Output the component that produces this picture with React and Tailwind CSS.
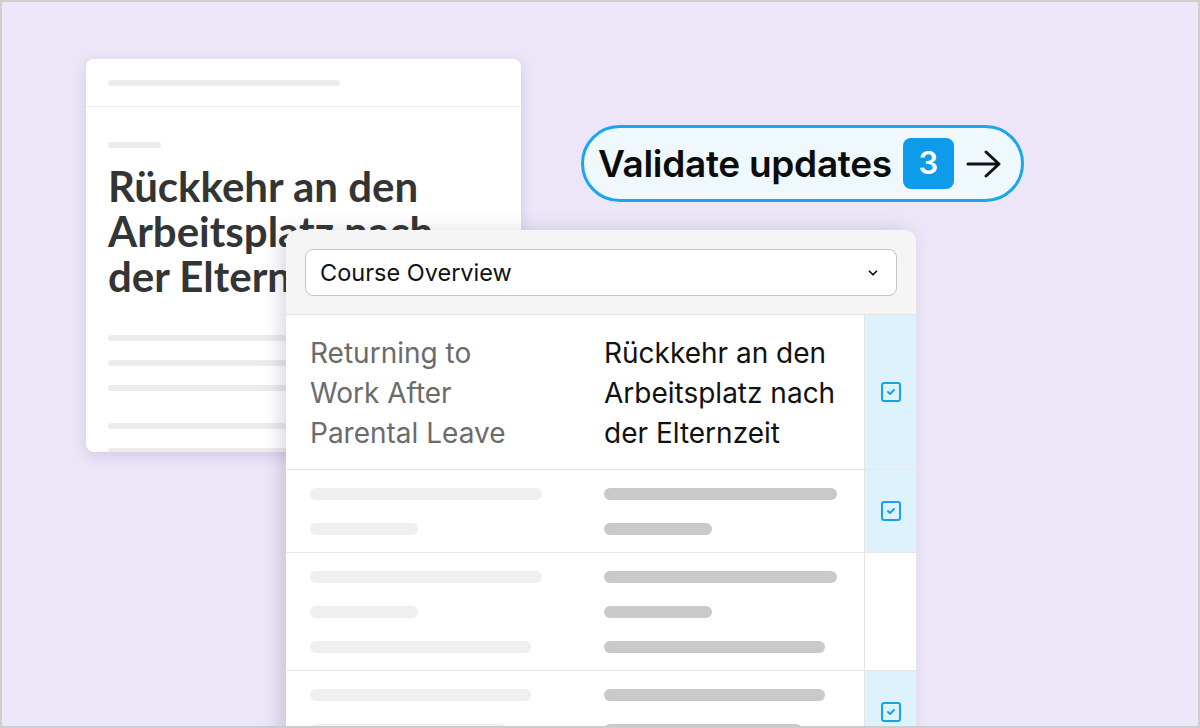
import { SquareCheck, ChevronDown } from "lucide-react";

function Bar({ w, dark }) {
  return (
    <div
      className={`h-3 rounded-full ${dark ? "bg-[#c9c9c9]" : "bg-[#efefef]"} ${w}`}
    />
  );
}

function CheckCell({ checked }) {
  return (
    <div
      className={`w-[52px] shrink-0 border-l border-[#e4e4e4] flex items-center justify-center ${
        checked ? "bg-[#ddf2fc]" : "bg-white"
      }`}
    >
      {checked && <SquareCheck size={24} strokeWidth={2} className="text-[#16a3ea]" />}
    </div>
  );
}

function BarRow({ left, right, checked, last }) {
  return (
    <div className={`flex ${last ? "" : "border-b border-[#e6e6e6]"}`}>
      <div className="flex-1 flex pt-[18px] pb-[17px]">
        <div className="w-[294px] pl-6 flex flex-col gap-[23px]">
          {left.map((w, i) => (
            <Bar key={i} w={w} />
          ))}
        </div>
        <div className="flex-1 pl-[24px] flex flex-col gap-[23px]">
          {right.map((w, i) => (
            <Bar key={i} w={w} dark />
          ))}
        </div>
      </div>
      <CheckCell checked={checked} />
    </div>
  );
}

export default function App() {
  return (
    <div className="w-[1200px] h-[728px] overflow-hidden border-2 border-[#cdcdcd] bg-[#ece6f8] relative font-['Inter',sans-serif]">
      {/* back card */}
      <div className="ml-[84px] mt-[57px] w-[435px] h-[393px] bg-white rounded-lg shadow-[0_4px_14px_rgba(90,70,140,0.18)] overflow-hidden">
        <div className="h-[48px] border-b border-[#ececec] px-[22px] flex items-center">
          <div className="h-[6px] w-[232px] rounded-full bg-[#ececec]" />
        </div>
        <div className="px-[22px] pt-[35px]">
          <div className="h-[6px] w-[53px] rounded-full bg-[#ececec]" />
          <h1 className="mt-[16px] font-['Lato',sans-serif] font-bold text-[42px] leading-[45px] text-[#333535]">
            Rückkehr an den
            <br />
            Arbeitsplatz nach
            <br />
            der Elternzeit
          </h1>
          <div className="mt-[36px] flex flex-col gap-[19px]">
            <div className="h-[6px] w-[380px] rounded-full bg-[#ececec]" />
            <div className="h-[6px] w-[380px] rounded-full bg-[#ececec]" />
            <div className="h-[6px] w-[380px] rounded-full bg-[#ececec]" />
          </div>
          <div className="mt-[32px] flex flex-col gap-[19px]">
            <div className="h-[6px] w-[380px] rounded-full bg-[#ececec]" />
            <div className="h-[6px] w-[380px] rounded-full bg-[#ececec]" />
          </div>
        </div>
      </div>

      {/* validate button */}
      <div className="absolute left-[579px] top-[123px] w-[443px] h-[77px] rounded-full border-[3px] border-[#1aa6ea] bg-[#eff8fd] flex items-center pl-[14px]">
        <span className="text-[37px] font-semibold text-[#0c0c0c] tracking-[-0.3px] leading-none">
          Validate updates
        </span>
        <span className="ml-[11px] w-[51px] h-[51px] rounded-lg bg-[#0c9cea] text-white text-[31px] font-semibold flex items-center justify-center">
          3
        </span>
        <svg width="36" height="30" viewBox="0 0 36 30" fill="none" className="ml-[12px]">
          <path d="M2 15H33M20 3l13 12-13 12" stroke="#111" strokeWidth="3" strokeLinecap="round" strokeLinejoin="round" />
        </svg>
      </div>

      {/* front panel */}
      <div className="absolute left-[284px] top-[228px] w-[630px] h-[520px] bg-white rounded-t-xl shadow-[-6px_0_18px_rgba(60,50,90,0.18)] overflow-hidden">
        <div className="h-[85px] bg-[#f5f5f5] border-b border-[#e4e4e4] px-[19px] pt-[19px]">
          <div className="h-[47px] bg-white border border-[#c6c6c6] rounded-lg flex items-center justify-between pl-[14px] pr-[16px]">
            <span className="text-[23.5px] text-[#111]">Course Overview</span>
            <ChevronDown size={14} strokeWidth={3} className="text-[#111]" />
          </div>
        </div>

        <div className="flex border-b border-[#e6e6e6]">
          <div className="flex-1 flex pt-[18px] pb-[16px]">
            <div className="w-[294px] pl-6 text-[28px] leading-[40px] text-[#6b6b6b]">
              Returning to
              <br />
              Work After
              <br />
              Parental Leave
            </div>
            <div className="flex-1 pl-[24px] text-[28px] leading-[40px] text-[#111]">
              Rückkehr an den
              <br />
              Arbeitsplatz nach
              <br />
              der Elternzeit
            </div>
          </div>
          <CheckCell checked />
        </div>

        <BarRow left={["w-[232px]", "w-[108px]"]} right={["w-[233px]", "w-[108px]"]} checked />
        <BarRow
          left={["w-[232px]", "w-[108px]", "w-[221px]"]}
          right={["w-[233px]", "w-[108px]", "w-[221px]"]}
        />
        <BarRow
          left={["w-[221px]", "w-[197px]"]}
          right={["w-[221px]", "w-[198px]"]}
          checked
          last
        />
      </div>
    </div>
  );
}
